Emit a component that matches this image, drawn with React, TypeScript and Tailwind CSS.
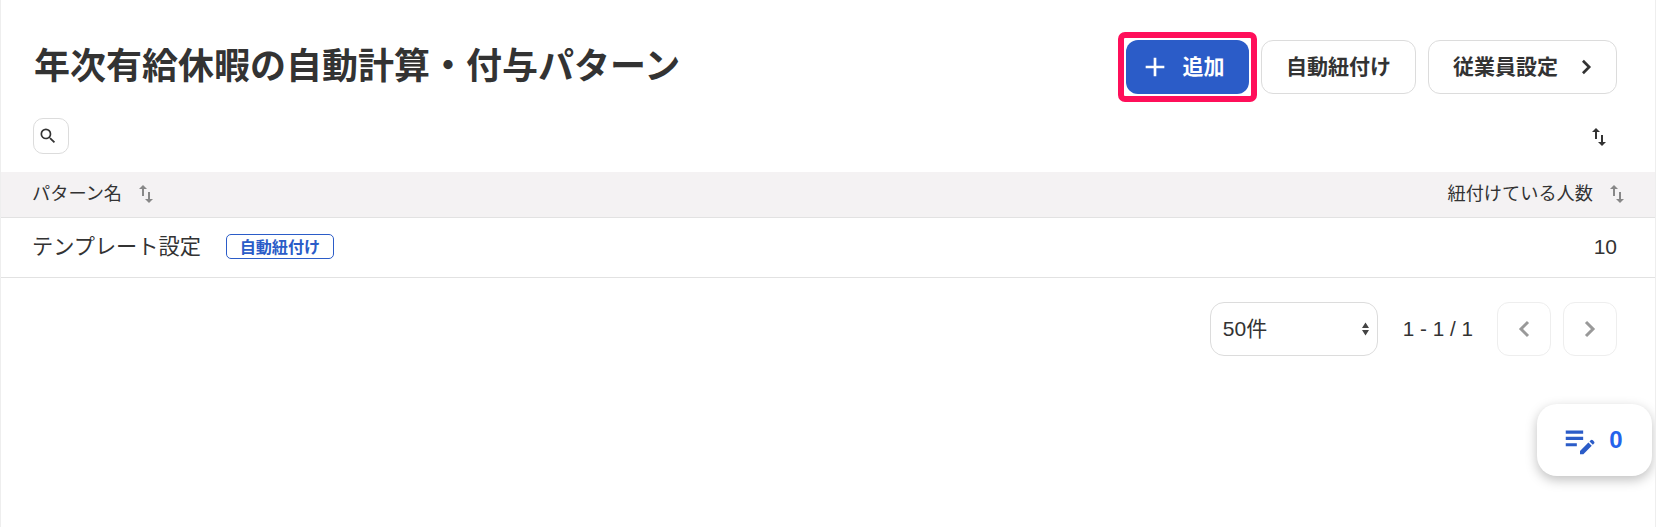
import { MdAdd, MdEditNote, MdSearch, MdSwapVert } from "react-icons/md";

const Chevron = ({ left = false, className }: { left?: boolean; className: string }) => (
  <svg viewBox="0 0 12 18" fill="none" stroke="currentColor" strokeWidth="3" className={className}>
    <path d={left ? "M10 2 3 9l7 7" : "M2 2l7 7-7 7"} />
  </svg>
);

const App = () => {
  return (
    <div className="relative h-[527px] w-[1656px] overflow-hidden border-x border-[#eeeeee] bg-white font-['Liberation_Sans','Noto_Sans_CJK_JP',sans-serif] text-[#333333]">
      <div className="flex h-[118px] items-start justify-between pl-[33px] pr-[38px] pt-[40px]">
        <h1 className="mt-[2px] text-[36px] font-bold leading-[50px]">年次有給休暇の自動計算・付与パターン</h1>
        <div className="flex items-center gap-[12px]">
          <div className="-m-[8px] rounded-[7px] border-[6px] border-[#ff0f5a] p-[2px]">
            <button className="flex h-[54px] w-[123px] items-center justify-center gap-[12px] rounded-[12px] bg-[#2b5cc8] pr-[12px] text-[21px] font-bold text-white">
              <MdAdd className="size-[32px]" />
              追加
            </button>
          </div>
          <button className="h-[54px] w-[155px] rounded-[12px] border border-[#dcdcdc] text-[21px] font-bold">自動紐付け</button>
          <button className="flex h-[54px] w-[189px] items-center justify-center gap-[23px] rounded-[12px] border border-[#dcdcdc] text-[21px] font-bold">
            従業員設定
            <Chevron className="h-[16px] w-[11px]" />
          </button>
        </div>
      </div>

      <div className="flex h-[54px] items-start justify-between pl-[32px] pr-[44px]">
        <button className="flex size-[36px] items-center justify-center rounded-[10px] border border-[#dcdcdc] pr-[6px]">
          <MdSearch className="size-[20px]" />
        </button>
        <MdSwapVert className="mt-[7px] size-[24px]" />
      </div>

      <div className="flex h-[46px] items-center justify-between border-b border-[#e2e2e2] bg-[#f4f2f3] pl-[31px] pr-[26px] text-[18.2px]">
        <div className="flex items-center gap-[12px]">
          パターン名
          <MdSwapVert className="size-[24px] text-[#888888]" />
        </div>
        <div className="flex items-center gap-[12px]">
          紐付けている人数
          <MdSwapVert className="size-[24px] text-[#888888]" />
        </div>
      </div>

      <div className="flex h-[60px] items-center justify-between border-b border-[#e2e2e2] pb-[1px] pl-[31px] pr-[38px] text-[21px]">
        <div className="flex items-center gap-[25px]">
          <span className="text-[21.2px]">テンプレート設定</span>
          <span className="flex h-[25px] w-[108px] items-center justify-center rounded-[5px] border border-[#2b5cc8] text-[16.1px] font-bold text-[#2b5cc8]">自動紐付け</span>
        </div>
        <span>10</span>
      </div>

      <div className="flex items-center justify-end pr-[38px] pt-[24px]">
        <div className="flex h-[54px] w-[168px] items-center justify-between rounded-[14px] border border-[#dcdcdc] pl-[12px] pr-[8px] text-[21px]">
          50件
          <svg width="7" height="14" viewBox="0 0 7 14" className="fill-[#444444]">
            <path d="M3.5 0.5 7 6H0zM3.5 13.5 0 8h7z" />
          </svg>
        </div>
        <span className="ml-[25px] text-[20.7px]">1 - 1 / 1</span>
        <button className="ml-[24px] flex size-[54px] items-center justify-center rounded-[12px] border border-[#eeeeee] text-[#999999]">
          <Chevron left className="h-[18px] w-[12px]" />
        </button>
        <button className="ml-[12px] flex size-[54px] items-center justify-center rounded-[12px] border border-[#eeeeee] text-[#999999]">
          <Chevron className="h-[18px] w-[12px]" />
        </button>
      </div>

      <div className="absolute left-[1536px] top-[404px] flex h-[72px] w-[115px] items-center justify-center gap-[10px] rounded-[20px] bg-white pr-[5px] shadow-[0_4px_12px_rgba(0,0,0,0.25)]">
        <MdEditNote className="size-[38px] text-[#2b5cc8]" />
        <span className="text-[24px] font-bold text-[#2563eb]">0</span>
      </div>
    </div>
  );
};

export default App;
